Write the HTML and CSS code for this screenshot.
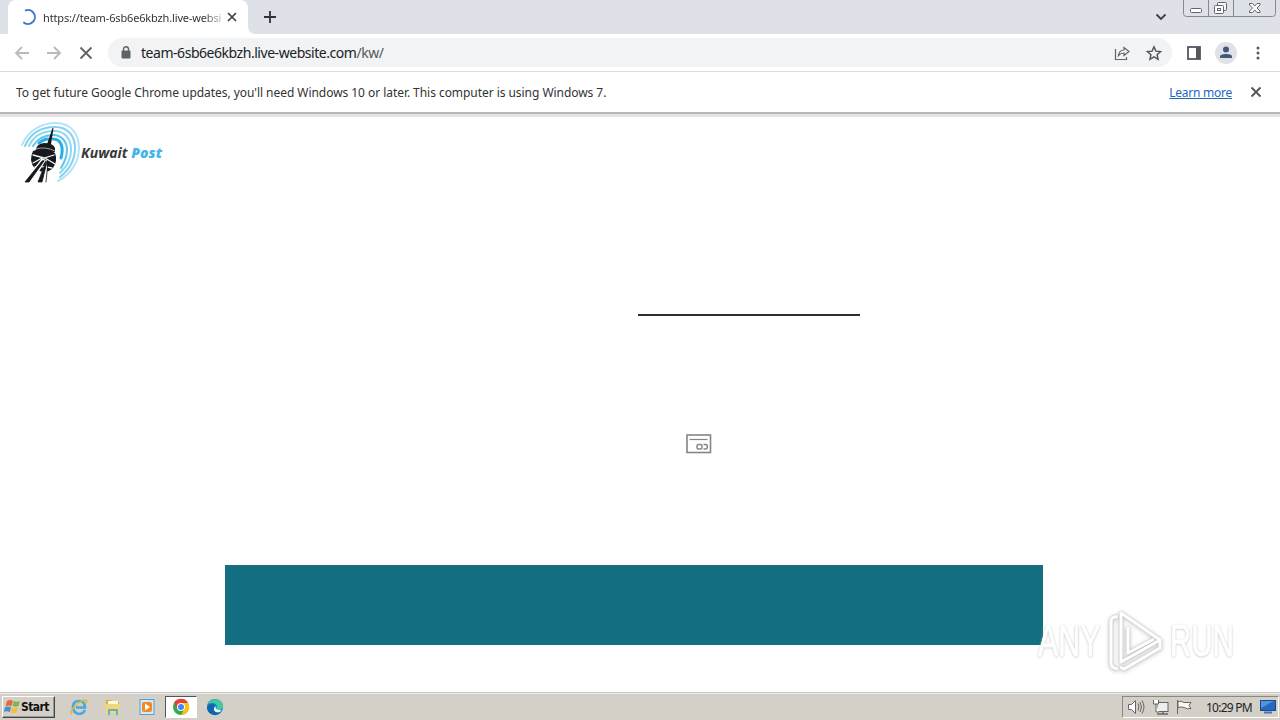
FILE: index.html
```html
<!DOCTYPE html>
<html lang="en">
<head>
<meta charset="utf-8">
<title>Browser window</title>
<link rel="stylesheet" href="styles.css">
</head>
<body>
<header class="tabstrip">
  <div class="tab">
    <svg class="spinner" width="18" height="18" viewBox="0 0 18 18"><path d="M6 2.600A7 7 0 1 1 4.300 14.200" fill="none" stroke="#3b78d0" stroke-width="2"/></svg>
    <span class="tab-title">https://team-6sb6e6kbzh.live-websi</span>
    <svg width="10" height="10" viewBox="0 0 10 10"><path d="M1 1l8 8M9 1L1 9" stroke="#3c4043" stroke-width="1.700"/></svg>
  </div>
  <svg class="foot" width="8" height="8" viewBox="0 0 8 8"><path d="M0 0Q0 8 8 8H0z" fill="#fff"/></svg>
  <svg class="newtab" width="14" height="14" viewBox="0 0 14 14"><path d="M7 1v12M1 7h12" stroke="#303238" stroke-width="1.800"/></svg>
  <svg class="chevron" width="12" height="8" viewBox="0 0 12 8"><path d="M1.500 1.500L6 6l4.500-4.500" fill="none" stroke="#3c4043" stroke-width="1.800"/></svg>
  <div class="winbtns">
    <svg width="93" height="17" viewBox="0 0 93 17" fill="none" stroke="#60646b"><path d="M.5 0v13.500q0 3 3 3h86q3 0 3-3V0M25.500 0v16M50.500 0v16" stroke="#858990"/><rect x="7.500" y="8.500" width="11" height="4" rx="1" fill="#fff"/><rect x="34.500" y="2.500" width="9" height="8" rx="1" fill="#f4f5f7"/><rect x="31.500" y="5.500" width="9" height="8" rx="1" fill="#fff"/><rect x="34.500" y="8.500" width="3" height="2"/><path d="M66.500 3.500h3l2.200 2.500 2.300-2.500h3v1.500l-3 3 3 3v1.500h-3l-2.300-2.500-2.200 2.500h-3v-1.500l3-3-3-3z" fill="#fff"/></svg>
  </div>
</header>
<nav class="toolbar">
  <svg class="navs" width="80" height="16" viewBox="0 0 80 16" fill="none" stroke-width="1.800"><path d="M15 8H2M8 2L2 8l6 6M33 8h13M40 2l6 6-6 6" stroke="#b8babd"/><path d="M66.500 2.500l11 11M77.500 2.500l-11 11" stroke="#606368"/></svg>
  <div class="omnibox">
    <svg width="10" height="13" viewBox="0 0 10 13"><rect x=".5" y="4.500" width="9" height="8" rx="1" fill="#5f6368"/><path d="M2.500 5V3.300a2.500 2.500 0 0 1 5 0V5" fill="none" stroke="#5f6368" stroke-width="1.400"/></svg>
    <span class="url"><span class="host">team-6sb6e6kbzh.live-website.com</span>/kw/</span>
    <svg class="share" width="16" height="16" viewBox="0 0 16 16" fill="none" stroke="#606368" stroke-width="1.200"><path d="M1.500 4v10.500h11V12"/><path d="M4.500 10.500C5 7 7 5 10 5V2.500l5 4-5 4V8C7.500 8 6 8.700 4.500 10.500z"/></svg>
    <svg width="16" height="16" viewBox="0 0 16 16"><path d="M8 1.800l1.900 4.300 4.700.5-3.500 3.100 1 4.600L8 11.900l-4.100 2.400 1-4.600-3.500-3.100 4.700-.5z" fill="none" stroke="#505459" stroke-width="1.400"/></svg>
  </div>
  <svg class="panel" width="14" height="14" viewBox="0 0 14 14"><rect x="1" y="1" width="12" height="12" fill="none" stroke="#54575c" stroke-width="1.800"/><path d="M9 1h4v12H9z" fill="#54575c"/></svg>
  <svg class="avatar" width="22" height="22" viewBox="0 0 22 22"><circle cx="11" cy="11" r="11" fill="#dfe2e7"/><circle cx="11" cy="7.500" r="3" fill="#47567b"/><path d="M5 16v-1.500C5 12.700 8 12 11 12s6 .7 6 2.500V16z" fill="#47567b"/></svg>
  <svg class="dots" width="4" height="14" viewBox="0 0 4 14" fill="#54575c"><circle cx="2" cy="2" r="1.500"/><circle cx="2" cy="7" r="1.500"/><circle cx="2" cy="12" r="1.500"/></svg>
</nav>
<div class="infobar">
  <span class="notice">To get future Google Chrome updates, you'll need Windows 10 or later. This computer is using Windows 7.</span>
  <a class="learn">Learn more</a>
  <svg width="12" height="12" viewBox="0 0 12 12"><path d="M1.500 1.500l9 9M10.500 1.500l-9 9" stroke="#54575c" stroke-width="1.900"/></svg>
</div>
<main class="page">
  <div class="brand">
    <svg width="62" height="62" viewBox="0 0 62 62" fill="none" stroke-linecap="round">
      <path d="M2 23C8 8 22 1 36 1c14 0 23 10 23 25 0 14-8 26-21 33" stroke="#b5e5f6" stroke-width="2"/>
      <path d="M5 24C11 10 23 5 35 5c13 0 20 9 20 21 0 13-6 22-15 29" stroke="#84d2f0" stroke-width="2"/>
      <path d="M9 24C14 13 24 9 34 9c11 0 17 8 17 18 0 11-4 17-11 24" stroke="#8ed8f2" stroke-width="2"/>
      <path d="M13 24c5-8 12-11 20-11 9 0 14 7 14 15s-3 13-6 18" stroke="#60c5ec" stroke-width="2"/>
      <path d="M19 21c4-3 7-4 9-4M33 17c8 0 11 8 8 19" stroke="#25afe5" stroke-width="3"/>
      <path d="M32.500 6l1 .3-2.500 16h-4z" fill="#151619"/>
      <path d="M16 27q1-5 8-6 9 0 11 5v4H15zM13 29q12-5 22 2 3 8-2 15-4 4-9 4-12-2-13-12 0-5 2-9z" fill="#18191d"/>
      <path d="M16 27q9-3 19 2" stroke="#bfc4c8" stroke-width=".8"/>
      <path d="M13 33l11 3 10-3M13 41l9-5M35 42l-10-6M15 45q8-1 17 1" stroke="#f4f6f7" stroke-width="1.300"/>
      <path d="M22 36L3 61h9l14-23zM27 36l-8 25h8V37z" fill="#fff"/>
      <path d="M22 39L5 60h4l15-21zM26 40l-8 20h4l5-20zM28 40l-2 20" fill="#17181b" stroke="#17181b" stroke-width=".8"/>
    </svg>
    <span class="wordmark">Kuwait <b>Post</b></span>
  </div>
  <div class="rule"></div>
  <svg class="card" width="26" height="20" viewBox="0 0 26 20" fill="none" stroke="#858585"><rect x="1" y="1" width="23.500" height="17.500" stroke-width="1.600"/><path d="M3.500 5.500h18" stroke-width="1.200"/><rect x="11" y="10.500" width="5" height="4.500" rx="1.500" stroke-width="1.500"/><path d="M17.500 10.500h2a1.800 2.200 0 0 1 0 4.500h-2" stroke-width="1.500"/></svg>
  <div class="banner"></div>
  <div class="watermark">
    <span class="wm any">ANY</span>
    <svg class="play" width="60" height="64" viewBox="0 0 60 64" fill="none" stroke="#fff" stroke-width="3" stroke-linejoin="round"><path d="M12 8q-7-1-7 5v41q0 5 7 6M15 4v49l39-22zM22 18v26l26-14M14 58l4 2 36-21v-7"/></svg>
    <span class="wm run">RUN</span>
  </div>
</main>
<footer class="taskbar">
  <div class="start">
    <svg width="17" height="16" viewBox="0 0 17 16"><path d="M3 2q3-2 6 0L7.500 7q-3-1-6 0z" fill="#ee6532"/><path d="M10 2q3 1.500 6 0l-1.500 5q-3 1.500-6 0z" fill="#79b84c"/><path d="M1.200 8q3-1 6 .2L5.700 13q-3-1.500-6 0z" fill="#448fd0"/><path d="M8.200 8.500q3 1.200 6 0L12.700 13q-3 2-6 .5z" fill="#f6bd39"/></svg>
    <span>Start</span>
  </div>
  <div class="apps">
    <div class="app"><svg width="18" height="18" viewBox="0 0 18 18" fill="none"><path d="M15 12q-2 4-6 4-6-1-6-7t6-6q6 0 6 6.500H6" stroke="#47a9df" stroke-width="2.700"/><path d="M2 16C-3 15 10 1 16 2q2 1-1 4" stroke="#e2b63e" stroke-width="1.400"/></svg></div>
    <div class="app"><svg width="18" height="18" viewBox="0 0 18 18"><path d="M2 2h5l1 2h7v12H2z" fill="#d9b246"/><path d="M4 3h10v5H4z" fill="#fff9d6"/><path d="M1 6h15l-1 10H2z" fill="#f0d878"/><path d="M4 17v-6h10v6h-2v-4H6v4z" fill="#62afd2"/></svg></div>
    <div class="app"><svg width="18" height="18" viewBox="0 0 18 18"><rect x="2" y="1.500" width="14" height="15" fill="#d5e8f6" stroke="#5a9dd1"/><rect x="4" y="4" width="10" height="10" rx="2" fill="#f18b20"/><path d="M7 5.500l5 3.500-5 3.500z" fill="#fff"/></svg></div>
    <div class="app active"><svg width="18" height="18" viewBox="0 0 18 18"><circle cx="9" cy="9" r="8" fill="#35a852"/><path d="M2 5a8 8 0 0 1 14 0L9 6 5.800 11z" fill="#e64235"/><path d="M16 5a8 8 0 0 1-7 12l3.500-6L9 5z" fill="#fbc116"/><circle cx="9" cy="9" r="4" fill="#fff"/><circle cx="9" cy="9" r="3" fill="#4285f4"/></svg></div>
    <div class="app"><svg width="18" height="18" viewBox="0 0 18 18"><circle cx="9" cy="9" r="8" fill="#1681cd"/><path d="M2 6C5-1 17 0 17 8q0 4-5 4-3-1-1-3C11 5 6 4 2 6z" fill="#42c9a0"/><path d="M1 9q3-5 8-2-3 3 0 7 3 2 6 0-4 5-10 2Q1 14 1 9z" fill="#1264ae"/><path d="M10 8q-2 4 5 4l-1 2q-7 1-6-4z" fill="#eef9fc"/></svg></div>
  </div>
  <div class="tray">
    <svg width="68" height="18" viewBox="0 0 68 18" fill="none" stroke="#666"><path d="M1.500 6.500h3l4-4v13l-4-4h-3z" fill="#fff"/><path d="M11 5.500q2 3.500 0 7M13 4q3 5 0 10M15 2.500q4 6.500 0 13"/><rect x="30" y="4.500" width="11" height="9" fill="#eee"/><path d="M30 16h11M36 14v2" stroke-width="1.500"/><path d="M26.500 2v4h5V2M29 6v8h3" fill="#fff"/><path d="M50.500 2v14M51 3.500q3-1 6 1h7l-2 3 2 3q-4 1-7-1-3-1-6 0z" fill="#f8f8f8"/></svg>
    <span class="clock">10:29 PM</span>
    <svg width="16" height="14" viewBox="0 0 16 14"><rect x=".5" y=".5" width="15" height="10" fill="#2868bd" stroke="#1d488c"/><path d="M1 1h13L1 8z" fill="#4c95df"/><path d="M4 12.500h8" stroke="#4677b0" stroke-width="2"/></svg>
  </div>
</footer>
</body>
</html>
```
FILE: styles.css
```css
* { box-sizing: border-box; }
body { margin: 0; width: 1280px; height: 720px; overflow: hidden; display: flex; flex-direction: column; background: #fff; font-family: "Noto Sans", sans-serif; color: #333; }
svg { display: block; flex: none; }
.tabstrip { height: 34px; flex: none; background: #dee1e8; display: flex; align-items: center; padding-left: 8px; }
.tab { width: 240px; height: 34px; background: #fff; border-radius: 8px 8px 0 0; display: flex; align-items: center; padding-left: 11px; }
.tab-title { width: 178px; margin: 0 6px; white-space: nowrap; font-size: 11px; letter-spacing: -0.15px; -webkit-mask-image: linear-gradient(90deg, #000 90%, rgba(0, 0, 0, .3)); mask-image: linear-gradient(90deg, #000 90%, rgba(0, 0, 0, .3)); }
.foot { align-self: flex-end; }
.newtab { margin-left: 7px; }
.chevron { margin-left: auto; }
.winbtns { align-self: flex-start; margin: 0 4px 0 16px; }
.toolbar { height: 38px; flex: none; border-bottom: 1px solid #d8dadd; display: flex; align-items: center; padding-left: 14px; }
.omnibox { height: 29px; width: 1064px; margin-left: 14px; border-radius: 15px; background: #f1f3f4; display: flex; align-items: center; padding: 0 10px 0 13px; }
.url { margin-left: 10px; font-size: 14px; letter-spacing: -0.46px; color: #55585c; white-space: nowrap; }
.host { color: #202124; }
.share { margin: 0 16px 0 auto; }
.panel { margin-left: 15px; }
.avatar { margin-left: 14px; }
.dots { margin-left: 19px; }
.infobar { height: 45px; flex: none; display: flex; align-items: center; padding: 0 18px 2px 16px; border-bottom: 3px solid #e4e4e4; box-shadow: inset 0 -2px #b6b7b9; }
.notice, .learn { font-size: 12px; white-space: nowrap; }
.notice { letter-spacing: -0.05px; }
.learn { margin: 0 18px 0 auto; color: #1f66bd; text-decoration: underline; letter-spacing: -0.25px; }
.page { height: 576px; flex: none; display: grid; grid-template-rows: 197px 120px 131px 80px 47px; align-items: start; position: relative; border-bottom: 1px solid #c8c8c8; }
.brand { display: flex; align-items: center; padding: 5px 0 0 20px; height: 67px; }
.wordmark { margin: -1px 0 0 -1px; font: italic bold 14px/18px "Open Sans", sans-serif; letter-spacing: 0.05px; color: #3a3939; white-space: nowrap; }
.wordmark b { color: #45b4e7; }
.rule { width: 222px; height: 2px; margin-left: 638px; background: #302d30; }
.card { margin-left: 686px; }
.banner { width: 818px; height: 80px; margin-left: 225px; background: #156f82; }
.watermark { position: absolute; left: 1038px; top: 492px; display: flex; align-items: center; height: 64px; gap: 4px; }
.play { filter: drop-shadow(0 0 1px #bbb) drop-shadow(0 1px 2px #ccc); }
.wm { display: block; font: 44px/50px "Liberation Sans", sans-serif; color: #fff; -webkit-text-stroke: 1px #fff; text-shadow: 0 0 2px #b4b4b4, 0 1px 3px #c8c8c8; transform-origin: left center; }
.any { width: 64px; transform: scaleX(.69); }
.run { width: 64px; transform: scaleX(.67); }
.taskbar { height: 27px; flex: none; background: #d4d0c8; border-top: 1px solid #eeece8; display: flex; align-items: center; }
.start { width: 53px; height: 22px; margin-left: 2px; border: 1px solid; border-color: #fff #444 #444 #fff; box-shadow: inset -1px -1px #999; display: flex; align-items: center; padding-left: 1px; font: bold 12px "DejaVu Sans Condensed", "DejaVu Sans", sans-serif; color: #111; letter-spacing: -0.6px; }
.apps { display: flex; margin-left: 8px; gap: 2px; }
.app { width: 32px; height: 22px; display: flex; align-items: center; justify-content: center; }
.app.active { background: #fff; border: 1px solid; border-color: #555 #fff #fff #555; }
.tray { width: 157px; height: 22px; margin: 0 1px 0 auto; border: 1px solid; border-color: #888 #fff #fff #888; display: flex; align-items: center; padding-left: 4px; }
.clock { width: 46px; margin: 0 8px 0 11px; font-size: 12px; letter-spacing: -0.75px; white-space: nowrap; color: #222; }
```
